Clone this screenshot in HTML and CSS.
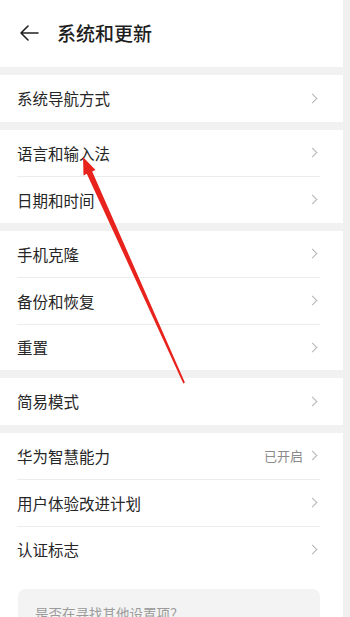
FILE: index.html
```html
<!DOCTYPE html>
<html lang="zh">
<head>
<meta charset="utf-8">
<link rel="stylesheet" href="styles.css">
</head>
<body>
<div class="page">
  <main class="main">
    <header class="header">
      <svg class="back" width="20" height="16" viewBox="0 0 20 16"><path d="M9 1 L2 8 L9 15 M2 8 H19" fill="none" stroke="#222" stroke-width="1.6" stroke-linecap="round" stroke-linejoin="round"/></svg>
      <span class="title">系统和更新</span>
    </header>
    <section class="card">
      <div class="row"><span class="label">系统导航方式</span><span class="chev"></span></div>
    </section>
    <section class="card">
      <div class="row"><span class="label">语言和输入法</span><span class="chev"></span></div>
      <div class="row"><span class="label">日期和时间</span><span class="chev"></span></div>
    </section>
    <section class="card">
      <div class="row"><span class="label">手机克隆</span><span class="chev"></span></div>
      <div class="row"><span class="label">备份和恢复</span><span class="chev"></span></div>
      <div class="row"><span class="label">重置</span><span class="chev"></span></div>
    </section>
    <section class="card">
      <div class="row"><span class="label">简易模式</span><span class="chev"></span></div>
    </section>
    <section class="card last">
      <div class="row"><span class="label">华为智慧能力</span><span class="value">已开启</span><span class="chev"></span></div>
      <div class="row"><span class="label">用户体验改进计划</span><span class="chev"></span></div>
      <div class="row"><span class="label">认证标志</span><span class="chev"></span></div>
      <div class="hint"><span class="hint-text">是否在寻找其他设置项？</span></div>
    </section>
  </main>
  <div class="side"></div>
</div>
<svg class="arrow" width="350" height="617" viewBox="0 0 350 617">
  <polygon points="83,157 95.5,170 92.2,171.4 184.9,382.6 183.3,383.4 86.8,173.8 83.5,175.5" fill="#e8231d"/>
</svg>
</body>
</html>
```
FILE: styles.css
```css
html, body {
  margin: 0;
  padding: 0;
}
body {
  width: 350px;
  height: 617px;
  overflow: hidden;
  background: #f1f1f1;
  font-family: "Noto Sans CJK SC", "Noto Sans", sans-serif;
  color: #222;
  position: relative;
}
.page {
  display: flex;
  height: 617px;
  overflow: hidden;
}
.main {
  width: 343px;
  display: flex;
  flex-direction: column;
  gap: 8px;
}
.side {
  flex: 1;
  background: #f0f0f0;
}
.header {
  flex-shrink: 0;
  height: 67px;
  background: #fff;
  display: flex;
  align-items: center;
  padding: 0 0 2px 19px;
  box-sizing: border-box;
}
.back {
  margin-right: 18px;
}
.title {
  font-size: 19px;
  font-weight: 500;
  color: #1e1e1e;
}
.card {
  flex-shrink: 0;
  background: #fff;
}
.card.last {
  flex: 1 0 auto;
}
.row {
  height: 46.5px;
  margin: 0 23px 0 17px;
  display: flex;
  align-items: center;
  border-top: 1px solid #ececec;
  box-sizing: border-box;
}
.row:first-child {
  border-top: none;
}
.label {
  flex: 1;
  font-size: 15.5px;
  color: #262626;
}
.value {
  font-size: 13px;
  color: #8a8a8a;
  margin-right: 6px;
}
.chev {
  width: 6px;
  height: 6px;
  border-top: 1.4px solid #b5b5b5;
  border-right: 1.4px solid #b5b5b5;
  transform: rotate(45deg);
  margin-right: 4px;
}
.hint {
  margin: 17px 23px 0 18px;
  height: 60px;
  background: #f3f3f3;
  border-radius: 7px;
  padding: 11px 0 0 17px;
  box-sizing: border-box;
}
.hint-text {
  font-size: 13.5px;
  color: #9a9a9a;
}
.arrow {
  position: absolute;
  left: 0;
  top: 0;
  pointer-events: none;
}
```
